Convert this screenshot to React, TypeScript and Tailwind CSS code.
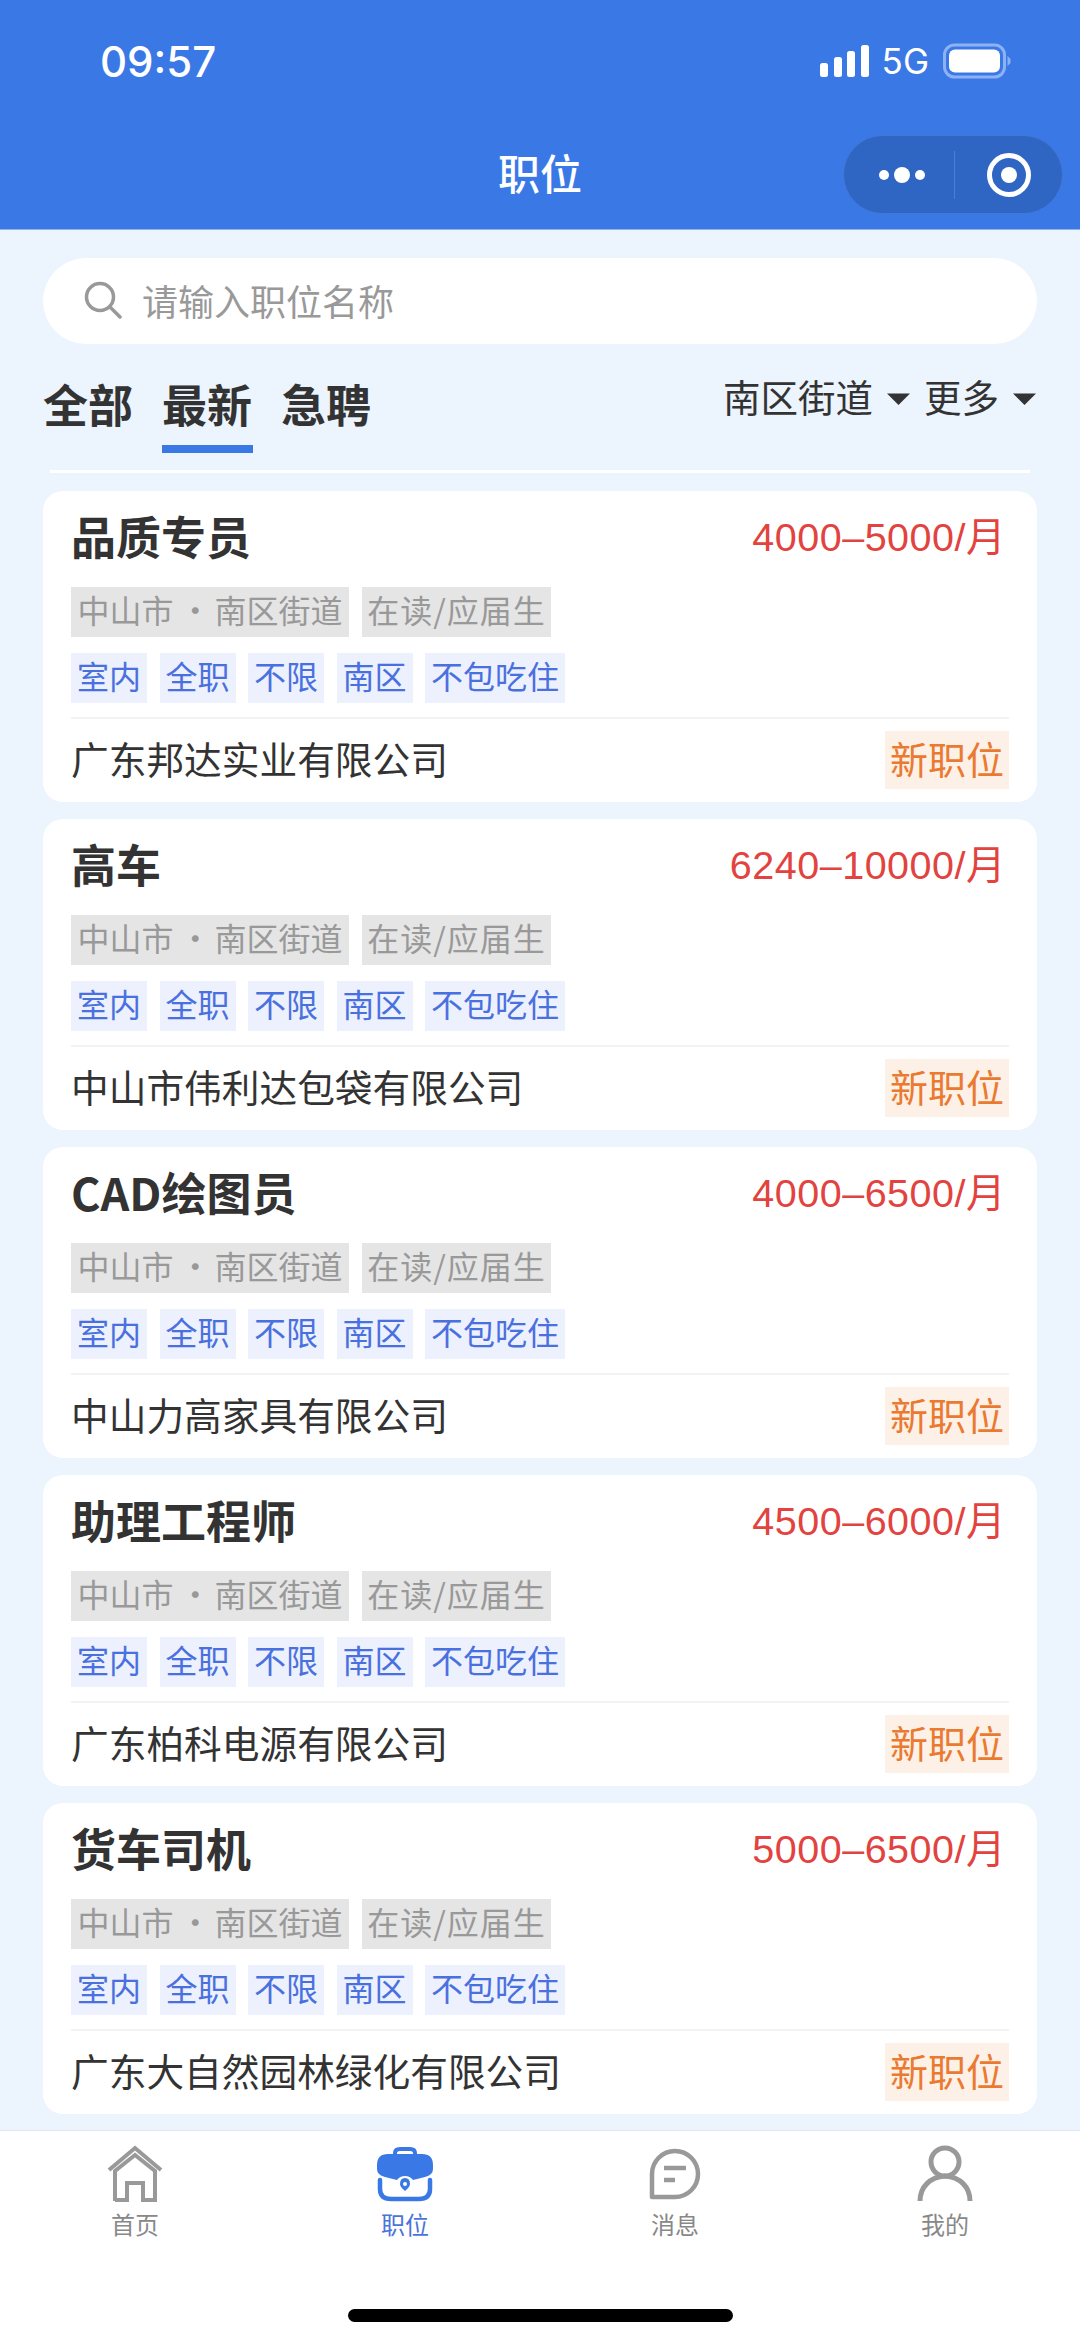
import React from "react";

const blueTagsDefault = ["室内", "全职", "不限", "南区", "不包吃住"];

const jobs = [
  { title: "品质专员", salary: "4000–5000/月", company: "广东邦达实业有限公司" },
  { title: "高车", salary: "6240–10000/月", company: "中山市伟利达包袋有限公司" },
  { title: "CAD绘图员", salary: "4000–6500/月", company: "中山力高家具有限公司" },
  { title: "助理工程师", salary: "4500–6000/月", company: "广东柏科电源有限公司" },
  { title: "货车司机", salary: "5000–6500/月", company: "广东大自然园林绿化有限公司" },
];

function Caret() {
  return (
    <svg width="25" height="14" viewBox="0 0 25 14" className="block">
      <path d="M1 1.5 H24 L12.5 13 Z" fill="#333333" />
    </svg>
  );
}

function StatusIcons() {
  return (
    <div className="flex items-center">
      <svg width="50" height="32" viewBox="0 0 50 32" className="block">
        <rect x="0" y="18" width="8" height="14" rx="2.5" fill="#fff" />
        <rect x="14" y="12" width="8" height="20" rx="2.5" fill="#fff" />
        <rect x="27" y="6" width="8" height="26" rx="2.5" fill="#fff" />
        <rect x="41" y="0" width="8" height="32" rx="2.5" fill="#fff" />
      </svg>
      <span className="ml-[12px] text-[35px] leading-[40px] text-white [font-family:'Inter',sans-serif]">5G</span>
      <svg width="68" height="36" viewBox="0 0 68 36" className="ml-[14px] block">
        <rect x="1.5" y="2" width="60" height="32" rx="10" fill="none" stroke="#8db2f2" strokeWidth="3" />
        <rect x="6" y="6.5" width="51" height="23" rx="6" fill="#fff" />
        <path d="M64.5 13 L67.5 16 V20 L64.5 23 Z" fill="#8db2f2" />
      </svg>
    </div>
  );
}

function Capsule() {
  return (
    <div className="mr-[17px] flex h-[79px] w-[220px] items-center justify-self-end rounded-full border border-[#4277d4] bg-[#2f66c3]">
      <div className="flex w-[110px] items-center justify-center gap-[5px] pl-[6px]">
        <span className="h-[10px] w-[10px] rounded-full bg-white" />
        <span className="h-[16px] w-[16px] rounded-full bg-white" />
        <span className="h-[10px] w-[10px] rounded-full bg-white" />
      </div>
      <div className="h-[48px] w-px bg-[#4a7ed8]" />
      <div className="flex flex-1 items-center justify-center">
        <svg width="44" height="44" viewBox="0 0 44 44" className="block">
          <circle cx="22" cy="22" r="19.5" fill="none" stroke="#fff" strokeWidth="5" />
          <circle cx="22" cy="22" r="8" fill="#fff" />
        </svg>
      </div>
    </div>
  );
}

function JobCard({ title, salary, company }: { title: string; salary: string; company: string }) {
  return (
    <div className="h-[311px] rounded-[20px] bg-white px-[28px] pt-[20px]">
      <div className="flex h-[50px] items-center justify-between">
        <span className="text-[45px] font-bold leading-[50px] text-[#333333]">{title}</span>
        <span className="pr-[3px] pt-[1px] text-[39.5px] leading-[50px] tracking-[0.5px] text-[#e2433f] [font-family:'Liberation_Sans','Noto_Sans_CJK_SC',sans-serif]">
          {salary}
        </span>
      </div>
      <div className="mt-[26px] flex gap-[13px]">
        <span className="flex h-[50px] w-[278px] items-center justify-center whitespace-nowrap bg-[#e5e5e5] pb-[6px] text-[32px] leading-none text-[#999999]">
          <span>
            中山市<span className="ml-[-1.5px] mr-[-4px]"> · </span>南区街道
          </span>
        </span>
        <span className="flex h-[50px] w-[189px] items-center justify-center whitespace-nowrap bg-[#e5e5e5] pb-[6px] text-[32px] leading-none tracking-[1px] text-[#999999]">
          在读/应届生
        </span>
      </div>
      <div className="mt-[16px] flex gap-[12.5px]">
        {blueTagsDefault.map((t) => (
          <span
            key={t}
            className="flex h-[50px] items-center whitespace-nowrap bg-[#ecf1fd] px-[6px] pb-[6px] text-[32px] leading-none text-[#4a70e0]"
          >
            {t}
          </span>
        ))}
      </div>
      <div className="mt-[14px] h-[2px] bg-[#f3f3f3]" />
      <div className="mt-[12px] flex h-[58px] items-start justify-between">
        <span className="text-[37.7px] leading-[53px] text-[#333333]">{company}</span>
        <span className="flex h-[58px] w-[124px] items-center justify-center bg-[#fdf0e6] pb-[5px] text-[38px] leading-none text-[#ea7a30]">
          新职位
        </span>
      </div>
    </div>
  );
}

function HomeIcon() {
  return (
    <svg width="56" height="57" viewBox="0 0 56 57" className="block">
      <g fill="none" stroke="#999999" strokeWidth="4">
        <path d="M2 25 L28 3 L54 25" />
        <path d="M8 56 V26 L28 10 L48 26 V55 H36 V38 H20 V55 H8" />
      </g>
    </svg>
  );
}

function CaseIcon() {
  return (
    <svg width="56" height="57" viewBox="0 0 56 57" className="block">
      <path d="M18 10 V8 Q18 4 23 4 H33 Q38 4 38 8 V10" fill="none" stroke="#3a78e6" strokeWidth="4" />
      <path d="M11 9 H45 Q56 9 56 20 V24 Q56 30 48 32 L36 35 Q33 31 28 31 Q23 31 20 35 L8 32 Q0 30 0 24 V20 Q0 9 11 9 Z" fill="#3a78e6" />
      <path d="M28 33 Q33 33 33 39 Q33 42 28 46 Q23 42 23 39 Q23 33 28 33 Z" fill="#3a78e6" />
      <circle cx="28" cy="39" r="2" fill="#fff" />
      <path d="M3 35 V44 Q3 54 14 54 H42 Q53 54 53 44 V35" fill="none" stroke="#3a78e6" strokeWidth="4.5" strokeLinecap="round" />
    </svg>
  );
}

function MessageIcon() {
  return (
    <svg width="56" height="57" viewBox="0 0 56 57" className="block">
      <path d="M28 6 A23 23 0 0 1 28 52 H5 V29 A23 23 0 0 1 28 6 Z" fill="none" stroke="#999999" strokeWidth="4.5" strokeLinejoin="round" />
      <path d="M17 23 H39" stroke="#999999" strokeWidth="4.5" />
      <path d="M17 35 H28" stroke="#999999" strokeWidth="4.5" />
    </svg>
  );
}

function PersonIcon() {
  return (
    <svg width="56" height="57" viewBox="0 0 56 57" className="block">
      <circle cx="28" cy="17" r="14" fill="none" stroke="#999999" strokeWidth="5" />
      <path d="M3 56 C3 42 13 32 28 31 C43 32 53 42 53 56" fill="none" stroke="#999999" strokeWidth="5" />
    </svg>
  );
}

function NavItem({ icon, label, active }: { icon: React.ReactNode; label: string; active?: boolean }) {
  return (
    <div className="flex flex-col items-center">
      {icon}
      <span className={active ? "mt-[7px] text-[24px] leading-[30px] text-[#4a74dc]" : "mt-[7px] text-[24px] leading-[30px] text-[#888888]"}>
        {label}
      </span>
    </div>
  );
}

export default function App() {
  return (
    <div className="flex h-[2337px] w-[1080px] flex-col overflow-hidden bg-[#ecf4fe] [font-family:'Noto_Sans_CJK_SC',sans-serif]">
      <header className="h-[230px] shrink-0 border-b border-[#8fb2ea] bg-[#3a78e6]">
        <div className="flex h-[122px] items-center justify-between pl-[100px] pr-[69px]">
          <span className="pt-[2px] text-[42px] font-medium leading-none text-white [font-family:'Inter',sans-serif]">09:57</span>
          <StatusIcons />
        </div>
        <div className="grid h-[107px] grid-cols-[1fr_auto_1fr] items-start pt-[13px]">
          <span />
          <span className="text-[42px] font-medium leading-[74px] text-white">职位</span>
          <Capsule />
        </div>
      </header>

      <div className="flex-1 px-[43px]">
        <div className="mt-[28px] flex h-[86px] items-center rounded-full bg-white pb-[2px] pl-[41px]">
          <svg width="38" height="38" viewBox="0 0 38 38" className="block">
            <circle cx="16" cy="16" r="13.5" fill="none" stroke="#999999" strokeWidth="3.5" />
            <path d="M26 26 L36 36" stroke="#999999" strokeWidth="3.5" strokeLinecap="round" />
          </svg>
          <span className="ml-[20px] text-[36px] leading-none text-[#999999]">请输入职位名称</span>
        </div>

        <div className="mt-[26px] flex h-[84px] items-start justify-between">
          <div className="flex gap-[28.5px]">
            <div className="flex flex-col items-center">
              <span className="text-[45px] font-bold leading-[68px] text-[#333333]">全部</span>
            </div>
            <div className="flex flex-col items-center">
              <span className="text-[45px] font-bold leading-[68px] text-[#333333]">最新</span>
              <span className="mt-[7px] h-[8px] w-[91px] bg-[#3a78e6]" />
            </div>
            <div className="flex flex-col items-center">
              <span className="text-[45px] font-bold leading-[68px] text-[#333333]">急聘</span>
            </div>
          </div>
          <div className="flex items-start pt-[1px] text-[37.5px] leading-[50px] text-[#333333]">
            <span>南区街道</span>
            <span className="ml-[13px] mr-[13px] mt-[21px]"><Caret /></span>
            <span>更多</span>
            <span className="ml-[13px] mt-[21px]"><Caret /></span>
          </div>
        </div>

        <div className="mx-[7px] mt-[16px] h-[3px] bg-white" />

        <div className="mt-[18px] flex flex-col gap-[17px]">
          {jobs.map((j) => (
            <JobCard key={j.title} title={j.title} salary={j.salary} company={j.company} />
          ))}
        </div>
      </div>

      <nav className="h-[207px] shrink-0 border-t border-[#e3e6ea] bg-white">
        <div className="grid grid-cols-4 pt-[14px]">
          <NavItem icon={<HomeIcon />} label="首页" />
          <NavItem icon={<CaseIcon />} label="职位" active />
          <NavItem icon={<MessageIcon />} label="消息" />
          <NavItem icon={<PersonIcon />} label="我的" />
        </div>
        <div className="mx-auto mt-[70px] h-[13px] w-[385px] rounded-full bg-black" />
      </nav>
    </div>
  );
}
